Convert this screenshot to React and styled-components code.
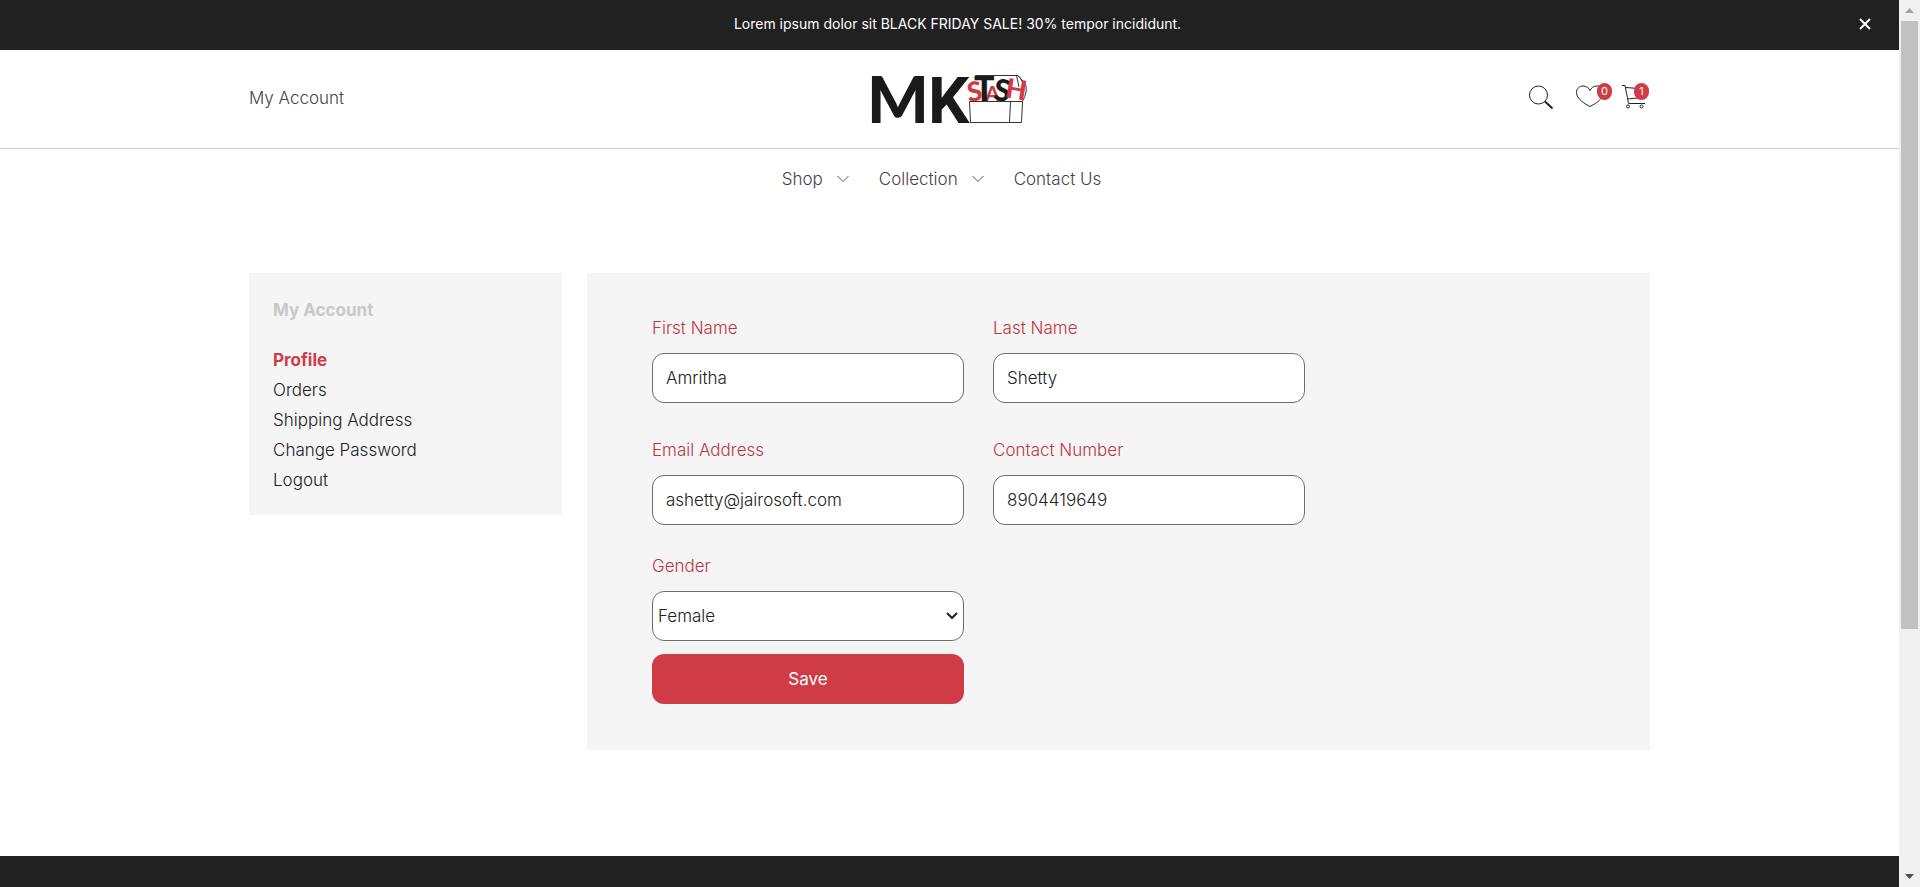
import React from "react";
import styled, { createGlobalStyle } from "styled-components";

const GlobalStyle = createGlobalStyle`
  *, *::before, *::after { box-sizing: border-box; }
  body {
    margin: 0;
    background: #fff;
    color: #212121;
    font-family: Inter, "Open Sans", sans-serif;
    font-size: 17px;
    font-weight: 300;
    line-height: 26px;
  }
  a { color: inherit; text-decoration: none; }
  button, input, select { font: inherit; color: inherit; }
`;

const Shell = styled.div`
  display: grid;
  grid-template-columns: minmax(0, 1fr) 21px;
  min-height: 100vh;
`;

const Page = styled.div`
  display: flex;
  flex-direction: column;
`;

const Container = styled.div`
  width: 100%;
  max-width: 1401px;
  margin: 0 auto;
`;

const Announcement = styled.div`
  display: flex;
  align-items: center;
  height: 50px;
  padding: 0 28px 2px 64px;
  background: #212121;
  color: #fff;
`;

const AnnouncementText = styled.p`
  flex: 1;
  margin: 0;
  text-align: center;
  font-size: 14px;
  font-weight: 400;
`;

const CloseButton = styled.button`
  display: flex;
  justify-content: flex-end;
  width: 20px;
  padding: 4px 0;
  border: 0;
  background: none;
  cursor: pointer;
`;

const Header = styled.header`
  border-bottom: 1px solid #d0d0d0;
`;

const HeaderRow = styled(Container)`
  display: grid;
  grid-template-columns: 1fr auto 1fr;
  align-items: center;
  height: 98px;
`;

const AccountLink = styled.a`
  justify-self: start;
  padding-bottom: 2px;
  color: #444;
`;

const LogoLink = styled.a`
  display: block;
  svg { display: block; overflow: visible; }
`;

const Actions = styled.div`
  display: flex;
  justify-content: flex-end;
  gap: 10px;
  padding: 0 1px 2px 0;
`;

const IconLink = styled.a`
  position: relative;
  display: block;
  width: ${(p) => p.$width}px;
  height: 26px;
  svg { display: block; }
`;

const Badge = styled.span`
  position: absolute;
  top: -2px;
  right: 0;
  width: 15px;
  height: 17px;
  border-radius: 8px;
  background: #d03c46;
  color: #fff;
  font-size: 11px;
  font-weight: 400;
  line-height: 16px;
  text-align: center;
`;

const Nav = styled.nav`
  display: flex;
  justify-content: center;
  gap: 30px;
  padding: 17px 16px 17px 0;
  color: #444;
`;

const NavLink = styled.a`
  display: flex;
  align-items: center;
  gap: 14px;
`;

const Main = styled(Container).attrs({ as: "main" })`
  display: grid;
  grid-template-columns: 313px minmax(0, 1fr);
  align-items: start;
  gap: 25px;
  padding: 64px 0 106px;
`;

const Sidebar = styled.aside`
  padding: 22px 24px 20px;
  background: #f5f5f5;
`;

const SidebarTitle = styled.h2`
  margin: 0 0 20px;
  color: #c8c8c8;
  font-size: 17px;
  font-weight: 700;
  line-height: 30px;
`;

const SidebarLink = styled.a`
  display: block;
  line-height: 30px;
  color: ${(p) => (p.$active ? "#d03c46" : "#212121")};
  font-weight: ${(p) => (p.$active ? 700 : 300)};
`;

const ProfileForm = styled.form`
  display: grid;
  grid-template-columns: 312px 312px;
  column-gap: 29px;
  padding: 42px 65px 46px;
  background: #f5f5f5;
`;

const Field = styled.div`
  grid-column: ${(p) => (p.$start ? 1 : "auto")};
  display: flex;
  flex-direction: column;
  gap: 12px;
  margin-bottom: ${(p) => p.$space}px;
  label { color: #c0353f; }
`;

const TextInput = styled.input`
  width: 100%;
  height: 50px;
  padding: 0 13px;
  border: 1px solid #6e6e6e;
  border-radius: 12px;
  background: #fff;
`;

const SelectBox = styled.div`
  display: grid;
  align-items: center;
  svg {
    grid-area: 1 / 1;
    justify-self: end;
    margin-right: 6px;
    pointer-events: none;
    z-index: 1;
  }
`;

const Select = styled.select`
  grid-area: 1 / 1;
  appearance: none;
  width: 100%;
  height: 50px;
  padding: 0 24px 0 5px;
  border: 1px solid #6e6e6e;
  border-radius: 12px;
  background: #fff;
`;

const SaveButton = styled.button`
  grid-column: 1;
  height: 50px;
  border: 0;
  border-radius: 12px;
  background: #d03c46;
  color: #fff;
  font-weight: 400;
  cursor: pointer;
`;

const Footer = styled.footer`
  flex: 1;
  min-height: 31px;
  background: #212121;
`;

const ScrollTrack = styled.div`
  position: sticky;
  top: 0;
  display: grid;
  grid-template-rows: 21px minmax(0, 608fr) minmax(0, 237fr) 21px;
  justify-items: center;
  align-items: center;
  height: 100vh;
  background: #f0f0f0;
`;

const ScrollThumb = styled.div`
  width: 17px;
  height: 100%;
  background: #c1c1c1;
`;

const ScrollArrow = styled.svg`
  grid-row: ${(p) => p.$row};
`;

function Logo() {
  return (
    <svg width="157" height="49" viewBox="0 0 157 49" role="img" aria-label="MK Stash">
      <g fontFamily="Lato, sans-serif" fontWeight="900">
        <g fontSize="65" fill="#1b191a">
          <text x="-4" y="48">M</text>
          <text x="57" y="48" fontFamily="Roboto, sans-serif" fontWeight="700">K</text>
        </g>
        <g fill="none" stroke="#333" strokeWidth="1">
          <path d="M107 5 L104.500 .5 H147 L154.500 9 Q157 17 151.500 26" />
          <path d="M145.500 .5 L148 12 M147 .5 Q153 7 152 12" />
        </g>
        <text x="96" y="26" fontSize="27" fill="#d03c46" transform="rotate(-8 103 16)">S</text>
        <text x="114" y="26" fontSize="21" fill="#d03c46">A</text>
        <text x="103" y="26" fontSize="34" fill="#1b191a">T</text>
        <text x="123" y="26" fontSize="30" fill="#1b191a" transform="rotate(8 132 16)">S</text>
        <text x="135" y="24" fontSize="27" fill="#d03c46" transform="rotate(9 146 14)">H</text>
      </g>
      <path d="M98.500 26.500 H151.500 L150.500 47.500 H99.500 Z M139.500 26.500 L138.500 47.500" fill="#fff" stroke="#333" />
    </svg>
  );
}

function Chevron() {
  return (
    <svg width="12" height="8" viewBox="0 0 12 8" fill="none" stroke="#555" aria-hidden="true">
      <path d="M.5 1 L6 6.500 L11.500 1" />
    </svg>
  );
}

const navItems = [
  { label: "Shop", menu: true },
  { label: "Collection", menu: true },
  { label: "Contact Us", menu: false },
];

const accountLinks = ["Profile", "Orders", "Shipping Address", "Change Password", "Logout"];

const fields = [
  { id: "first-name", label: "First Name", value: "Amritha", type: "text", space: 34 },
  { id: "last-name", label: "Last Name", value: "Shetty", type: "text", space: 34 },
  { id: "email", label: "Email Address", value: "ashetty@jairosoft.com", type: "email", space: 28 },
  { id: "phone", label: "Contact Number", value: "8904419649", type: "tel", space: 28 },
];

export default function App() {
  return (
    <>
      <GlobalStyle />
      <Shell>
        <Page>
          <Announcement>
            <AnnouncementText>Lorem ipsum dolor sit BLACK FRIDAY SALE! 30% tempor incididunt.</AnnouncementText>
            <CloseButton type="button" aria-label="Close">
              <svg width="12" height="12" viewBox="0 0 12 12" stroke="#fff" strokeWidth="2">
                <path d="M1 1 L11 11 M11 1 L1 11" />
              </svg>
            </CloseButton>
          </Announcement>
          <Header>
            <HeaderRow>
              <AccountLink href="#account">My Account</AccountLink>
              <LogoLink href="#home"><Logo /></LogoLink>
              <Actions>
                <IconLink href="#search" $width={37} aria-label="Search">
                  <svg width="25" height="26" viewBox="0 0 25 26" fill="none" stroke="#222">
                    <circle cx="9.500" cy="10" r="9" />
                    <path d="M16 16.500 L23.500 23.500" strokeWidth="2" />
                  </svg>
                </IconLink>
                <IconLink href="#wishlist" $width={36} aria-label="Wishlist">
                  <svg width="28" height="26" viewBox="0 0 28 26" fill="none" stroke="#222">
                    <path d="M14 21.500 C9 19 .5 14 .5 7.500 C.5 3.500 3.500 1 7 1 C10.500 1 13 3 14 5.500 C15 3 17.500 1 21 1 C24.500 1 27.500 3.500 27.500 7.500 C27.500 14 19 19 14 21.500 Z" />
                  </svg>
                  <Badge>0</Badge>
                </IconLink>
                <IconLink href="#cart" $width={27} aria-label="Cart">
                  <svg width="27" height="26" viewBox="0 0 27 26" fill="none" stroke="#222">
                    <path d="M0 .5 H3 L6.500 18.500 H23 M3.500 2.500 L24 4 L20.500 12.500 L5.500 14" />
                    <circle cx="6" cy="21.500" r="1.500" />
                    <circle cx="19.500" cy="21.500" r="1.500" />
                  </svg>
                  <Badge>1</Badge>
                </IconLink>
              </Actions>
            </HeaderRow>
          </Header>
          <Nav>
            {navItems.map((item) => (
              <NavLink key={item.label} href="#">
                {item.label}
                {item.menu && <Chevron />}
              </NavLink>
            ))}
          </Nav>
          <Main>
            <Sidebar>
              <SidebarTitle>My Account</SidebarTitle>
              {accountLinks.map((label, i) => (
                <SidebarLink key={label} href="#" $active={i === 0}>{label}</SidebarLink>
              ))}
            </Sidebar>
            <ProfileForm onSubmit={(e) => e.preventDefault()}>
              {fields.map((f) => (
                <Field key={f.id} $space={f.space}>
                  <label htmlFor={f.id}>{f.label}</label>
                  <TextInput id={f.id} type={f.type} defaultValue={f.value} />
                </Field>
              ))}
              <Field $start $space={13}>
                <label htmlFor="gender">Gender</label>
                <SelectBox>
                  <Select id="gender" defaultValue="Female">
                    <option>Female</option>
                    <option>Male</option>
                  </Select>
                  <svg width="12" height="8" viewBox="0 0 12 8" fill="none" stroke="#222" strokeWidth="2" aria-hidden="true">
                    <path d="M1 1 L6 6 L11 1" />
                  </svg>
                </SelectBox>
              </Field>
              <SaveButton type="submit">Save</SaveButton>
            </ProfileForm>
          </Main>
          <Footer />
        </Page>
        <ScrollTrack aria-hidden="true">
          <ScrollArrow $row={1} width="9" height="5" viewBox="0 0 9 5" fill="#a3a3a3">
            <path d="M0 5 L4.500 0 L9 5 Z" />
          </ScrollArrow>
          <ScrollThumb />
          <ScrollArrow $row={4} width="9" height="5" viewBox="0 0 9 5" fill="#505050">
            <path d="M0 0 L4.500 5 L9 0 Z" />
          </ScrollArrow>
        </ScrollTrack>
      </Shell>
    </>
  );
}
